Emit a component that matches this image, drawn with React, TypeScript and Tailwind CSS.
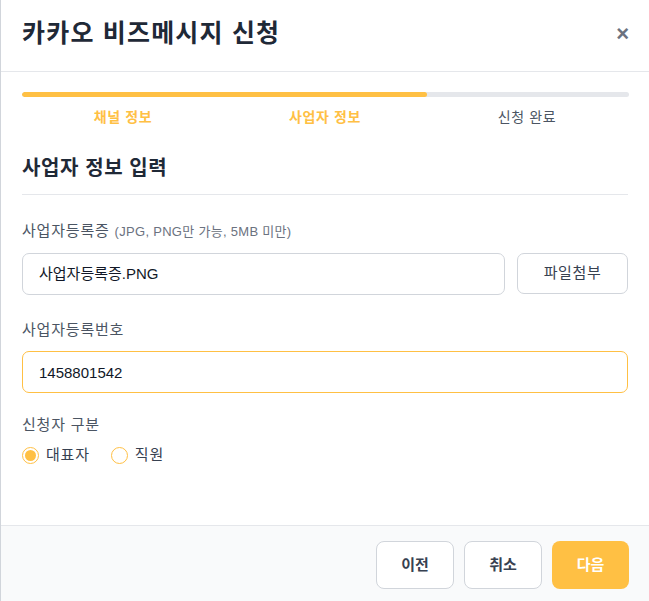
import { useEffect, useRef, useState } from 'react';

const steps = ['채널 정보', '사업자 정보', '신청 완료'];

export default function App() {
  const [bizNo, setBizNo] = useState('1458801542');
  const [applicant, setApplicant] = useState<'owner' | 'staff'>('owner');
  const inputRef = useRef<HTMLInputElement>(null);

  useEffect(() => {
    const el = inputRef.current;
    if (el) {
      el.focus();
      el.setSelectionRange(el.value.length, el.value.length);
    }
  }, []);

  return (
    <div
      className="w-[649px] h-[601px] bg-white border-l border-[#d1d5db] flex flex-col overflow-hidden"
      style={{ fontFamily: '"Liberation Sans", "Noto Sans CJK KR", sans-serif' }}
    >
      {/* Header */}
      <div className="h-[72px] shrink-0 flex items-center justify-between pl-[21px] pr-[20px] pb-[4px] border-b border-[#e5e7eb]">
        <h1 className="text-[25px] font-bold text-[#1f2937] tracking-[1.2px]">카카오 비즈메시지 신청</h1>
        <button className="text-[#6b7280] text-[22px] font-bold leading-none">×</button>
      </div>

      {/* Body */}
      <div className="flex-1 px-[21px] pt-[20px]">
        {/* Progress */}
        <div className="h-[5px] w-[607px] rounded-full bg-[#e5e7eb] overflow-hidden">
          <div className="h-full w-[405px] rounded-full bg-[#ffc044]" />
        </div>
        <div className="grid grid-cols-3 mt-[10px] text-[14px] leading-[20px] tracking-[0.6px]">
          {steps.map((s, i) => (
            <span key={s} className={`text-center ${i < 2 ? 'font-bold text-[#ffc044]' : 'text-[#4b5563]'}`}>
              {s}
            </span>
          ))}
        </div>

        <h2 className="mt-[27px] text-[20px] font-bold text-[#1f2937] leading-[28px] tracking-[0.6px]">
          사업자 정보 입력
        </h2>
        <div className="mt-[12px] h-px bg-[#e5e7eb]" />

        {/* Business certificate */}
        <div className="mt-[26px] text-[15px] text-[#4b5563] leading-[20px] tracking-[0.8px]">
          사업자등록증 <span className="text-[13px] text-[#6b7280] tracking-[0.3px]">(JPG, PNG만 가능, 5MB 미만)</span>
        </div>
        <div className="mt-[11px] flex gap-[12px]">
          <div className="flex-1 h-[42px] rounded-[7px] border border-[#d1d5db] flex items-center px-[16px] text-[15px] text-[#111827]">
            사업자등록증.PNG
          </div>
          <button className="w-[111px] h-[41px] rounded-[7px] border border-[#d1d5db] text-[15px] text-[#374151] tracking-[0.6px]">
            파일첨부
          </button>
        </div>

        {/* Business number */}
        <div className="mt-[25px] text-[15px] text-[#4b5563] leading-[20px] tracking-[0.8px]">사업자등록번호</div>
        <input
          ref={inputRef}
          value={bizNo}
          onChange={e => setBizNo(e.target.value)}
          className="mt-[11px] w-full h-[42px] rounded-[7px] border border-[#ffc044] px-[16px] text-[15px] text-[#111827] outline-none caret-[#111827]"
        />

        {/* Applicant type */}
        <div className="mt-[22px] text-[15px] text-[#4b5563] leading-[20px] tracking-[0.8px]">신청자 구분</div>
        <div className="mt-[9px] flex items-center gap-[21px] text-[15px] text-[#374151] tracking-[0.8px]">
          {(['owner', 'staff'] as const).map(v => (
            <label key={v} className="flex items-center gap-[7px] cursor-pointer" onClick={() => setApplicant(v)}>
              <span className="w-[17px] h-[17px] rounded-full border border-[#ffc044] flex items-center justify-center">
                {applicant === v && <span className="w-[11px] h-[11px] rounded-full bg-[#ffc044]" />}
              </span>
              {v === 'owner' ? '대표자' : '직원'}
            </label>
          ))}
        </div>
      </div>

      {/* Footer */}
      <div className="h-[76px] shrink-0 bg-[#f9fafb] border-t border-[#e5e7eb] flex items-start justify-end gap-[10px] pt-[15px] pr-[20px]">
        <button className="w-[78px] h-[48px] rounded-[8px] border border-[#d1d5db] bg-white text-[15px] font-bold text-[#374151]">
          이전
        </button>
        <button className="w-[78px] h-[48px] rounded-[8px] border border-[#d1d5db] bg-white text-[15px] font-bold text-[#374151]">
          취소
        </button>
        <button className="w-[77px] h-[48px] rounded-[8px] bg-[#ffc044] text-[15px] font-bold text-white">
          다음
        </button>
      </div>
    </div>
  );
}
